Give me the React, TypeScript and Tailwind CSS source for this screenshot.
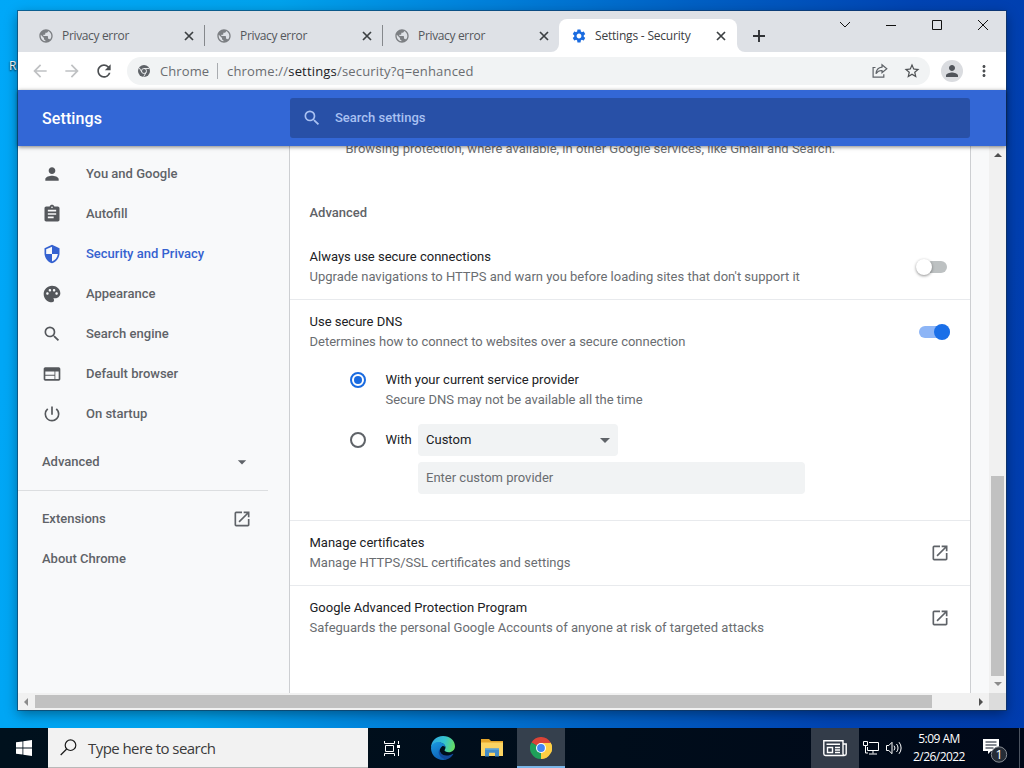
import type { ReactNode } from "react";
import {
  MdArrowBack,
  MdArrowDropDown,
  MdArrowForward,
  MdAssignment,
  MdMoreVert,
  MdOpenInNew,
  MdPalette,
  MdPerson,
  MdPowerSettingsNew,
  MdPublic,
  MdRefresh,
  MdSearch,
  MdSecurity,
  MdSettings,
  MdStarBorder,
  MdWeb,
} from "react-icons/md";

const tabs = [
  { title: "Privacy error", active: false, divider: true },
  { title: "Privacy error", active: false, divider: true },
  { title: "Privacy error", active: false, divider: false },
  { title: "Settings - Security", active: true, divider: false },
];

const menuItems = [
  { label: "You and Google", icon: MdPerson },
  { label: "Autofill", icon: MdAssignment },
  { label: "Security and Privacy", icon: MdSecurity, selected: true },
  { label: "Appearance", icon: MdPalette },
  { label: "Search engine", icon: MdSearch },
  { label: "Default browser", icon: MdWeb },
  { label: "On startup", icon: MdPowerSettingsNew },
];

function CloseIcon() {
  return (
    <svg width="16" height="16" viewBox="0 0 16 16" fill="none" stroke="#3c4043" strokeWidth="1.700">
      <path d="M4 4l8 8M12 4l-8 8" />
    </svg>
  );
}

function TabStrip() {
  return (
    <div className="flex h-[41px] items-end bg-[#dee1e6] pl-2">
      {tabs.map((tab, i) => (
        <div
          key={i}
          className={
            tab.active
              ? "relative -ml-px flex h-[33px] w-[178px] items-center rounded-t-lg bg-white pl-3"
              : "flex h-[33px] w-[178px] items-center pl-3"
          }
        >
          {tab.active && (
            <>
              <svg className="absolute -left-2 bottom-0" width="8" height="8" viewBox="0 0 8 8">
                <path d="M8 0v8H0a8 8 0 0 0 8-8z" fill="#fff" />
              </svg>
              <svg className="absolute -right-2 bottom-0" width="8" height="8" viewBox="0 0 8 8">
                <path d="M0 0v8h8a8 8 0 0 1-8-8z" fill="#fff" />
              </svg>
            </>
          )}
          {tab.active ? (
            <MdSettings className="size-4 text-[#1a6be0]" />
          ) : (
            <MdPublic className="size-4 text-[#7c7f83]" />
          )}
          <span
            className={
              tab.active
                ? "ml-2 grow whitespace-nowrap text-[12px] tracking-[-0.2px] text-[#3c4043]"
                : "ml-2 grow whitespace-nowrap text-[12px] tracking-[-0.34px] text-[#54575b]"
            }
          >
            {tab.title}
          </span>
          <CloseIcon />
          <span
            className={tab.divider ? "-mr-px ml-[7px] h-[21px] w-px bg-[#85888c]" : "ml-2 w-0"}
          />
        </div>
      ))}
      <svg className="mb-[9px] ml-[15px]" width="14" height="14" viewBox="0 0 14 14">
        <path d="M7 1v12M1 7h12" stroke="#303236" strokeWidth="1.900" />
      </svg>
      <svg
        className="mb-[15px] ml-auto mr-[15px]"
        width="152"
        height="26"
        viewBox="0 0 152 26"
        fill="none"
        stroke="#111"
      >
        <path d="M1 11l5 5 5-5" />
        <path d="M47 14.500h10" />
        <path d="M93.500 9.500h9v9h-9z" />
        <path d="M139 9l10 10M149 9l-10 10" />
      </svg>
    </div>
  );
}

function Toolbar() {
  return (
    <div className="flex h-[38px] items-center bg-white pl-3">
      <MdArrowBack className="size-5 text-[#bfc1c3]" />
      <MdArrowForward className="ml-3 size-5 text-[#bfc1c3]" />
      <MdRefresh className="ml-3 size-5 text-[#4c4f52]" />
      <div className="ml-[13px] flex h-7 w-[803px] items-center rounded-full bg-[#f1f3f4] pl-[11px] text-[13px]">
        <svg width="12" height="12" viewBox="0 0 12 12">
          <circle cx="6" cy="6" r="6" fill="#5f6368" />
          <circle cx="6" cy="6" r="2.500" fill="none" stroke="#f1f3f4" strokeWidth="0.900" />
          <path
            d="M6 3.500h5M3.830 7.250L1.300 2.900M8.170 7.250L5.700 11.700"
            stroke="#f1f3f4"
            strokeWidth="0.900"
          />
        </svg>
        <span className="ml-[10px] w-[49px] whitespace-nowrap pt-px tracking-[0.1px] text-[#6a6d71]">
          Chrome
        </span>
        <span className="ml-2 h-4 w-px bg-[#a9acb0]" />
        <span className="ml-[9px] whitespace-nowrap pt-px tracking-[0.18px] text-[#6a6d71]">
          chrome://<span className="text-[#202124]">settings</span>/security?q=enhanced
        </span>
        <svg
          className="ml-auto"
          width="16"
          height="16"
          viewBox="0 0 16 16"
          fill="none"
          stroke="#5f6368"
          strokeWidth="1.200"
        >
          <path d="M3.500 4.500H1.100v9.700h10.700v-3" />
          <path d="M10 1.800l4.800 4-4.800 4V7.500C7.300 7.400 5.400 8.500 4 10.700 4.300 7.200 6.400 4.500 10 4.100z" />
        </svg>
        <MdStarBorder className="ml-[15px] mr-[9px] size-[18px] text-[#4c4f52]" />
      </div>
      <span className="ml-[11px] flex size-[22px] items-center justify-center rounded-full bg-[#dadce0]">
        <MdPerson className="size-[18px] text-[#50545a]" />
      </span>
      <MdMoreVert className="ml-3 size-[18px] text-[#4c4f52]" />
    </div>
  );
}

function SettingsHeader() {
  return (
    <div className="relative z-10 flex h-14 items-center bg-[#3367d6] pl-6 shadow-[0_1px_4px_rgba(0,0,0,0.5)]">
      <h1 className="w-[248px] pt-0.5 text-[16px] font-medium tracking-[0.1px] text-white">
        Settings
      </h1>
      <div className="flex h-10 w-[680px] items-center rounded-[3px] bg-[#2850a7] pl-3 text-[#a9c1f2]">
        <MdSearch className="size-5" />
        <span className="ml-[13px] text-[13px] font-medium">Search settings</span>
      </div>
    </div>
  );
}

function Sidebar() {
  return (
    <nav className="flex w-[271px] flex-col bg-[#f8f9fa] pt-2 text-[13px] font-medium text-[#5f6368]">
      {menuItems.map(({ label, icon: Icon, selected }) => (
        <div
          key={label}
          className={
            selected
              ? "flex h-10 items-center pl-6 text-[#3562d0]"
              : "flex h-10 items-center pl-6"
          }
        >
          <Icon className={selected ? "size-5" : "size-5 text-[#55585c]"} />
          <span className="ml-6">{label}</span>
        </div>
      ))}
      <div className="mt-2 flex h-10 items-center justify-between pl-6 pr-[37px]">
        Advanced
        <MdArrowDropDown className="size-5" />
      </div>
      <div className="mb-2 mr-[21px] mt-2 h-px bg-[#dcdee0]" />
      <div className="flex h-10 items-center justify-between pl-6 pr-[37px]">
        Extensions
        <MdOpenInNew className="size-5" />
      </div>
      <div className="flex h-10 items-center pl-6">About Chrome</div>
    </nav>
  );
}

type RowProps = {
  title: string;
  detail: string;
  children: ReactNode;
};

function SettingRow({ title, detail, children }: RowProps) {
  return (
    <div className="flex h-16 items-center justify-between pl-[19.5px] pr-5">
      <div>
        <div className="text-[#202124]">{title}</div>
        <div>{detail}</div>
      </div>
      {children}
    </div>
  );
}

function Divider() {
  return <div className="h-px bg-[#e8eaed]" />;
}

function SecurityPage() {
  return (
    <main className="h-[547px] w-[682px] overflow-hidden border-x border-[#cdcfd2] bg-white text-[13px] leading-5 text-[#6a6d71]">
      <p className="-mt-[7px] pl-[55.5px]">
        Browsing protection, where available, in other Google services, like Gmail and Search.
      </p>
      <h2 className="mb-3 mt-11 pl-[19.5px] font-medium text-[#5f6368]">Advanced</h2>
      <SettingRow
        title="Always use secure connections"
        detail="Upgrade navigations to HTTPS and warn you before loading sites that don't support it"
      >
        <span className="mr-[3px] flex h-3 w-7 items-center rounded-full bg-[#bdc1c2]">
          <span className="-ml-[3px] size-4 rounded-full bg-white shadow-[0_1px_3px_rgba(0,0,0,0.45)]" />
        </span>
      </SettingRow>
      <Divider />
      <SettingRow
        title="Use secure DNS"
        detail="Determines how to connect to websites over a secure connection"
      >
        <span className="flex h-3 w-[31px] items-center justify-end rounded-full bg-[#8db5f6]">
          <span className="size-4 rounded-full bg-[#1a6fe8]" />
        </span>
      </SettingRow>
      <div className="pb-[26px] pl-[60px] pt-1.5">
        <div className="flex">
          <span className="mt-0.5 flex size-4 items-center justify-center rounded-full border-2 border-[#1a6be0]">
            <span className="size-2 rounded-full bg-[#1a6be0]" />
          </span>
          <div className="ml-[19.5px]">
            <div className="text-[#202124]">With your current service provider</div>
            <div>Secure DNS may not be available all the time</div>
          </div>
        </div>
        <div className="mt-3.5 flex items-center text-[#202124]">
          <span className="size-4 rounded-full border-2 border-[#5f6368]" />
          <span className="ml-[19.5px] w-[32.5px]">With</span>
          <div className="flex h-8 w-[200px] items-center justify-between rounded bg-[#f1f3f4] pl-2 pr-2">
            Custom
            <svg width="10" height="5" viewBox="0 0 10 5">
              <path d="M0 0h10L5 5z" fill="#5f6368" />
            </svg>
          </div>
        </div>
        <div className="ml-[68px] mt-1.5 flex h-8 w-[387px] items-center rounded bg-[#f1f3f4] pl-2">
          Enter custom provider
        </div>
      </div>
      <Divider />
      <SettingRow title="Manage certificates" detail="Manage HTTPS/SSL certificates and settings">
        <MdOpenInNew className="size-5 text-[#5f6368]" />
      </SettingRow>
      <Divider />
      <SettingRow
        title="Google Advanced Protection Program"
        detail="Safeguards the personal Google Accounts of anyone at risk of targeted attacks"
      >
        <MdOpenInNew className="size-5 text-[#5f6368]" />
      </SettingRow>
    </main>
  );
}

function VerticalScrollbar() {
  return (
    <div className="ml-auto flex w-[17px] flex-col items-center bg-[#f1f1f1]">
      <svg className="mt-[7px]" width="8" height="4" viewBox="0 0 8 4">
        <path d="M0 4h8L4 0z" fill="#505050" />
      </svg>
      <div className="mt-[319px] h-[200px] w-[13px] bg-[#c1c1c1]" />
      <svg className="mt-[6px]" width="8" height="4" viewBox="0 0 8 4">
        <path d="M0 0h8L4 4z" fill="#8b8b8b" />
      </svg>
    </div>
  );
}

function HorizontalScrollbar() {
  return (
    <div className="flex h-[17px] items-center bg-[#f1f1f1]">
      <svg className="ml-[6px]" width="4" height="8" viewBox="0 0 4 8">
        <path d="M4 0v8L0 4z" fill="#8b8b8b" />
      </svg>
      <div className="ml-[7px] h-[13px] w-[897px] bg-[#c1c1c1]" />
      <svg className="ml-[47px]" width="4" height="8" viewBox="0 0 4 8">
        <path d="M0 0v8l4-4z" fill="#505050" />
      </svg>
      <div className="ml-auto size-[17px] bg-[#dcdcdc]" />
    </div>
  );
}

function EdgeIcon() {
  return (
    <svg width="24" height="24" viewBox="0 0 24 24">
      <defs>
        <linearGradient id="edgeTop" x1="0" y1="0.300" x2="1" y2="0.500">
          <stop offset="0" stopColor="#2fa8e0" />
          <stop offset="0.550" stopColor="#35c4cf" />
          <stop offset="1" stopColor="#66dd62" />
        </linearGradient>
        <linearGradient id="edgeBody" x1="0" y1="0" x2="0.400" y2="1">
          <stop offset="0" stopColor="#1a9be0" />
          <stop offset="1" stopColor="#0f62b8" />
        </linearGradient>
      </defs>
      <path d="M0 12C0 5 5 0 12 0s12 4.800 12 10.200c0 3.600-2.800 6-6.200 6-2.600 0-4.300-.9-4.300-1.900 0-.6 1-1.200 1-2.900C14.500 8.500 11 6 7 6.500 3.500 7 1 9 0 12z" fill="url(#edgeTop)" />
      <path d="M0 12.500C.3 8.300 3.500 6 7.300 6c3.900 0 7 2.400 7.200 5.200-1-1-2-1.300-3-1.200C9 12 8.300 14 9.200 16.500c1 2.700 3.300 4.800 6.300 7-1.100.3-2.200.5-3.500.5C5.300 24 .2 19 0 12.500z" fill="url(#edgeBody)" />
      <path d="M8.700 13c-.3 3.500 2.500 6.300 6.500 6.500 2.700.1 5-.9 6.300-1.600.6-.3 1 .1.600.7-1.700 2.600-4 4.200-6.600 4.900-4.500-.6-8-4-7.800-7.500 0-1.200.4-2.200 1-3z" fill="#12499a" />
    </svg>
  );
}

function ExplorerIcon() {
  return (
    <svg width="22" height="18" viewBox="0 0 22 18">
      <path d="M0 0h8l2 2h12v4H0z" fill="#e5a52a" />
      <path d="M0 3.500h22V17H0z" fill="#fcd462" />
      <path d="M4 17.500V9.500h14v8h-4v-3.700H8v3.700z" fill="#438cc7" />
      <path d="M4 9.500h14v1.300H4z" fill="#62a9dc" />
    </svg>
  );
}

function ChromeIcon() {
  return (
    <svg width="22" height="22" viewBox="0 0 22 22">
      <path d="M11 11L1.470 5.500A11 11 0 0 1 20.530 5.500z" fill="#db4437" />
      <path d="M11 11l9.530-5.500A11 11 0 0 1 11 22z" fill="#fdcf45" />
      <path d="M11 11v11A11 11 0 0 1 1.470 5.500z" fill="#1fa05a" />
      <path d="M11 6h9.800a11 11 0 0 1 0 10L15.300 13.500z" fill="#fdcf45" />
      <path d="M11 6h9.800l-.3-.5L11 3z" fill="#db4437" />
      <path d="M15.300 13.500L11 22l6-2 2-4z" fill="#fdcf45" />
      <circle cx="11" cy="11" r="5" fill="#fff" />
      <circle cx="11" cy="11" r="3.900" fill="#4285f4" />
    </svg>
  );
}

function Taskbar() {
  return (
    <footer className="flex h-10 items-center bg-[linear-gradient(90deg,#00111d,#000d1b_60%,#000818)] text-white">
      <div className="flex w-12 justify-center">
        <svg width="16" height="16" viewBox="0 0 16 16" fill="#fff">
          <path d="M0 2.300L6.500 1.400v6.200H0zM7.300 1.300L16 0v7.600H7.300zM0 8.400h6.500v6.200L0 13.700zM7.300 8.400H16V16l-8.700-1.300z" />
        </svg>
      </div>
      <div className="flex h-10 w-80 items-center border-b border-[#b9b9b9] bg-[#f2f2f2] pl-3">
        <svg width="17" height="17" viewBox="0 0 17 17" fill="none" stroke="#1b1b1b" strokeWidth="1.200">
          <circle cx="10.500" cy="6.200" r="5.300" />
          <path d="M6.700 10L0.700 16" />
        </svg>
        <span className="ml-[11px] whitespace-nowrap pt-px text-[15px] tracking-[-0.56px] text-[#3b3b3b]">
          Type here to search
        </span>
      </div>
      <div className="flex w-[47px] justify-center">
        <svg width="16" height="15" viewBox="0 0 16 15" fill="none" stroke="#fff">
          <path d="M.5 0v2.500h10V0M.5 15v-2.500h10V15M1.500 4.500h8v6h-8zM14.500 0v3M14.500 8v7" />
          <path d="M13 4h3v3h-3z" fill="#fff" stroke="none" />
        </svg>
      </div>
      <div className="flex w-14 justify-center">
        <EdgeIcon />
      </div>
      <div className="flex w-[42px] justify-center">
        <ExplorerIcon />
      </div>
      <div className="ml-1 flex h-10 w-12 items-center justify-center border-b-2 border-[#7ab6e8] bg-[#35404d] pt-0.5">
        <ChromeIcon />
      </div>
      <div className="ml-auto flex h-10 w-12 items-center justify-center bg-[#333c49]">
        <svg width="24" height="17" viewBox="0 0 24 17" fill="none" stroke="#fff" strokeWidth="1.400">
          <path d="M20 15.500H2.500A1.800 1.800 0 0 1 .8 13.700V.8H20v12.900a1.600 1.600 0 0 0 3.200 0V4H20M20 15.500h1.500" />
          <path d="M4.500 7.500h5v5h-5zM3.500 4.200h13.500M12 7.500h5M12 10h5M12 12.500h5" />
        </svg>
      </div>
      <svg className="ml-1" width="16" height="14" viewBox="0 0 16 14" fill="none" stroke="#fff">
        <path d="M6 1.500h9.500v8H4.500V6M10 9.500v3M6 13h8M.5.500h4v4h-4zM2.500 4.500V12H5" />
      </svg>
      <svg className="ml-[7px]" width="17" height="14" viewBox="0 0 17 14" fill="none" stroke="#fff">
        <path d="M.5 4.500h2.300L6 1.300v11.400L2.800 9.500H.5z" />
        <path d="M8 4.700a3.500 3.500 0 0 1 0 4.600M10.500 3a6 6 0 0 1 0 8M13 1.200a9 9 0 0 1 0 11.600" />
      </svg>
      <div className="ml-2 flex w-[56px] flex-col items-center whitespace-nowrap text-[12px] leading-[18px] tracking-[-0.55px]">
        <span>5:09 AM</span>
        <span>2/26/2022</span>
      </div>
      <svg className="ml-[15px] mt-1" width="26" height="26" viewBox="0 0 26 26">
        <path d="M1 2h16v12H9l-3 3v-3H1z" fill="#fff" />
        <path d="M3.500 5h11M3.500 8h11M3.500 11h8" stroke="#0a1524" />
        <circle cx="17" cy="17.500" r="7.700" fill="#252c36" stroke="#868b92" />
        <text x="17" y="22" textAnchor="middle" fontSize="12.500" fill="#fff">
          1
        </text>
      </svg>
      <span className="ml-[11px] mr-1 h-10 w-px bg-[#4b5360]" />
    </footer>
  );
}

export default function App() {
  return (
    <div className="relative flex h-[768px] w-[1024px] flex-col overflow-hidden bg-[linear-gradient(97deg,#00a8f8_0%,#00a2ec_25%,#0083dc_42%,#0060c4_62%,#0044b3_82%,#003cae_100%)] font-['Open_Sans','Noto_Sans',sans-serif]">
      <span className="absolute left-[9px] top-[58px] text-[12px] leading-4 text-white [text-shadow:0_1px_2px_#000]">
        R
      </span>
      <div className="relative ml-[18px] mt-[11px] w-[988px] shadow-[0_0_0_1px_rgba(20,50,80,0.55),0_4px_12px_rgba(0,0,0,0.4)]">
        <TabStrip />
        <Toolbar />
        <div className="font-['Roboto',sans-serif]">
          <SettingsHeader />
          <div className="flex h-[547px] bg-[#f8f9fa]">
            <Sidebar />
            <SecurityPage />
            <VerticalScrollbar />
          </div>
          <HorizontalScrollbar />
        </div>
      </div>
      <div className="mt-auto">
        <Taskbar />
      </div>
    </div>
  );
}
